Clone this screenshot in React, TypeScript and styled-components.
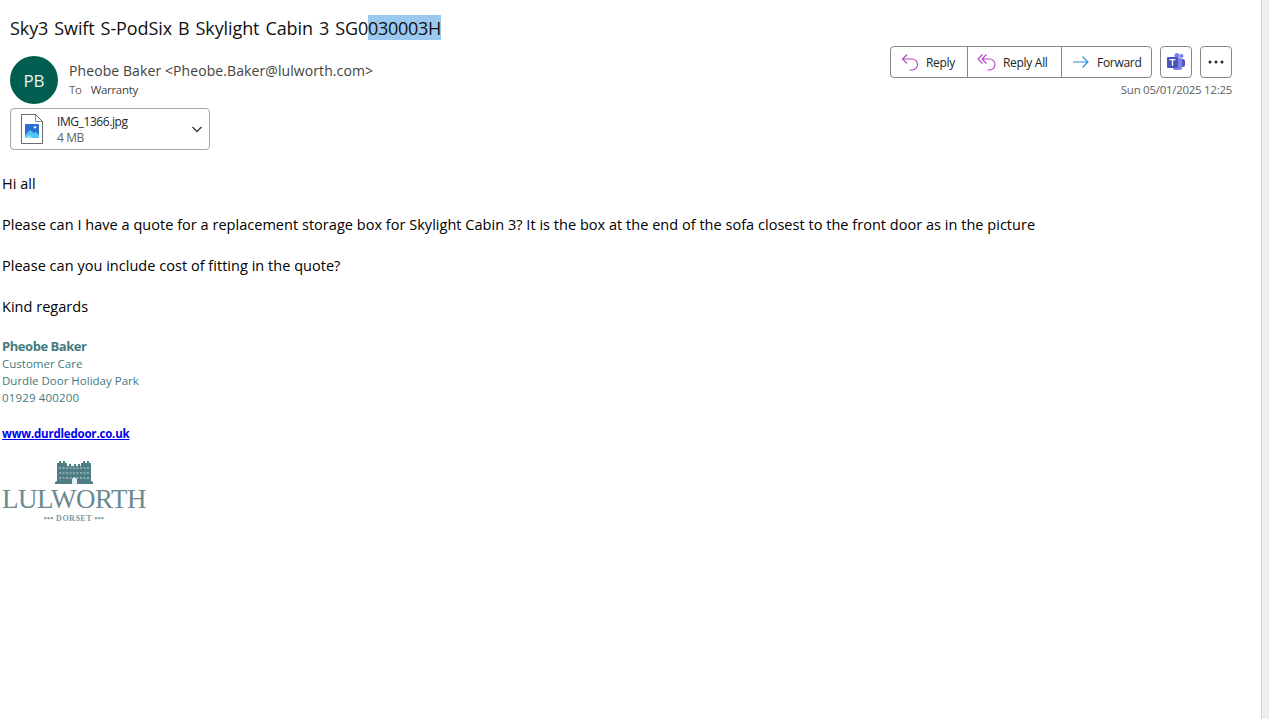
import React from "react";
import styled, { createGlobalStyle } from "styled-components";

const Global = createGlobalStyle`
  html, body { margin: 0; padding: 0; height: 100%; background: #fff; }
  #root { height: 100%; }
  * { box-sizing: border-box; }
`;

const ui = `"Open Sans", "Noto Sans", "Liberation Sans", sans-serif`;

const Page = styled.div`
  display: flex;
  width: 1269px;
  height: 719px;
  overflow: hidden;
  font-family: ${ui};
  color: #242424;
`;
const Main = styled.main`
  flex: 1;
  min-width: 0;
  display: flex;
  flex-direction: column;
`;
const Rail = styled.div`
  width: 8px;
  background: #f0eeee;
  border-left: 1px solid #d4d2d2;
`;
const Subject = styled.h1`
  margin: 0;
  padding: 15px 0 0 10px;
  height: 46px;
  font-size: 18px;
  line-height: 27px;
  font-weight: 400;
  letter-spacing: -0.1px;
  word-spacing: 1.45px;
  color: #111;
  white-space: nowrap;
`;
const Selected = styled.span`
  background: #9cc9ef;
  display: inline-block;
  height: 25px;
  padding-top: 1px;
  line-height: 25px;
  letter-spacing: -0.32px;
  vertical-align: baseline;
`;
const HeaderRow = styled.div`
  display: flex;
  justify-content: space-between;
  align-items: flex-start;
  padding: 0 29px 0 10px;
  height: 62px;
`;
const Sender = styled.div`
  display: flex;
  gap: 11px;
  padding-top: 10px;
`;
const Avatar = styled.div`
  width: 48px;
  height: 48px;
  border-radius: 50%;
  background: #005e50;
  color: #e8f4f1;
  display: flex;
  align-items: center;
  justify-content: center;
  font-size: 17px;
  letter-spacing: -0.2px;
`;
const Who = styled.div`
  display: flex;
  flex-direction: column;
  padding-top: 5px;
`;
const From = styled.div`
  font-size: 14px;
  line-height: 20px;
  letter-spacing: 0.09px;
  color: #424242;
  white-space: nowrap;
`;
const To = styled.div`
  display: flex;
  gap: 9px;
  font-size: 11.5px;
  line-height: 18px;
  letter-spacing: -0.3px;
  color: #424242;
`;
const ToLabel = styled.span`
  color: #616161;
`;
const Actions = styled.div`
  display: flex;
  flex-direction: column;
  align-items: flex-end;
`;
const Buttons = styled.div`
  display: flex;
  gap: 8px;
`;
const Group = styled.div`
  display: flex;
  height: 32px;
  border: 1px solid #8a8886;
  border-radius: 4px;
  background: #fff;
`;
const ActionButton = styled.div<{ $w: number }>`
  width: ${(p) => p.$w}px;
  display: flex;
  align-items: center;
  gap: 6px;
  padding-left: 9px;
  font-size: 12px;
  letter-spacing: -0.3px;
  color: #242424;
  & + & { border-left: 1px solid #8a8886; }
`;
const IconButton = styled.div`
  width: 32px;
  height: 32px;
  border: 1px solid #8a8886;
  border-radius: 4px;
  display: flex;
  align-items: center;
  justify-content: center;
`;
const DateLine = styled.div`
  font-size: 11.5px;
  line-height: 16px;
  letter-spacing: -0.28px;
  color: #616161;
  margin-top: 4px;
`;
const Attachment = styled.div`
  display: flex;
  align-items: center;
  width: 200px;
  height: 42px;
  margin-left: 10px;
  padding: 0 4px 0 9px;
  border: 1px solid #a6a6a6;
  border-radius: 4px;
`;
const FileText = styled.div`
  flex: 1;
  margin-left: 13px;
  padding-top: 2px;
  display: flex;
  flex-direction: column;
  font-size: 12px;
  line-height: 16px;
  letter-spacing: -0.42px;
`;
const FileSize = styled.span`
  color: #616161;
`;
const Body = styled.div`
  padding: 24px 0 0 2px;
  font-size: 14.5px;
  line-height: 20.5px;
  letter-spacing: 0.03px;
  color: #000;
`;
const Para = styled.p`
  margin: 0 0 20.5px;
  white-space: nowrap;
`;
const Signature = styled.div`
  padding-left: 2px;
  font-size: 11.5px;
  line-height: 17px;
  letter-spacing: 0;
  color: #437a80;
`;
const SigName = styled.div`
  font-size: 13px;
  font-weight: 700;
  line-height: 17px;
  letter-spacing: -0.45px;
`;
const SigPhone = styled.div`
  letter-spacing: 0.15px;
`;
const SigLink = styled.a`
  display: block;
  margin-top: 19px;
  font-size: 11.5px;
  line-height: 17px;
  font-weight: 700;
  letter-spacing: -0.2px;
  color: #0000ee;
  text-decoration: underline;
`;
const Logo = styled.div`
  width: 144px;
  margin-top: 19px;
  display: flex;
  flex-direction: column;
  align-items: center;
  color: #6b8a90;
  font-family: "Liberation Serif", serif;
`;
const LogoWord = styled.div`
  font-size: 27px;
  line-height: 24px;
  margin-top: 3px;
  white-space: nowrap;
  letter-spacing: -0.45px;
`;
const LogoSub = styled.div`
  font-size: 8px;
  line-height: 10px;
  margin-top: 3px;
  font-weight: 700;
  letter-spacing: 0.5px;
  white-space: nowrap;
  color: #7c989d;
`;

const ReplyIcon = () => (
  <svg width="20" height="20" viewBox="0 0 20 20" fill="none" stroke="#b146c2" strokeWidth="1.1">
    <path d="M7 2.5 2.5 7 7 11.5M2.5 7H12a5.5 5.5 0 0 1 0 11H9.5" />
  </svg>
);
const ReplyAllIcon = () => (
  <svg width="20" height="20" viewBox="0 0 20 20" fill="none" stroke="#b146c2" strokeWidth="1.1">
    <path d="M5.5 2.5 1 7l4.5 4.5M9.5 2.5 5 7l4.5 4.5M5 7h7.5a5.5 5.5 0 0 1 0 11H10.5" />
  </svg>
);
const ForwardIcon = () => (
  <svg width="20" height="20" viewBox="0 0 20 20" fill="none" stroke="#2a8dd4" strokeWidth="1.1">
    <path d="M2 10h15M11.5 4.5 17 10l-5.5 5.5" />
  </svg>
);
const TeamsIcon = () => (
  <svg width="20" height="20" viewBox="0 0 20 20">
    <circle cx="15.5" cy="4" r="2" fill="#7b83eb" />
    <circle cx="11" cy="3.5" r="2.6" fill="#7b83eb" />
    <rect x="13" y="7" width="6" height="8" rx="2" fill="#5059c9" />
    <rect x="7" y="6" width="9" height="12" rx="2" fill="#7b83eb" />
    <rect x="1" y="5" width="11" height="11" rx="1" fill="#4b53bc" />
    <path d="M3.5 7.7h6M6.5 7.7v6" stroke="#fff" strokeWidth="1.3" fill="none" />
  </svg>
);
const MoreIcon = () => (
  <svg width="16" height="4" viewBox="0 0 16 4" fill="#242424">
    <circle cx="2" cy="2" r="1.5" />
    <circle cx="8" cy="2" r="1.5" />
    <circle cx="14" cy="2" r="1.5" />
  </svg>
);
const FileIcon = () => (
  <svg width="24" height="32" viewBox="0 0 24 32" fill="none">
    <path d="M1.5 1.5h14l7 7v22h-21z" fill="#fff" stroke="#6b6b6b" />
    <path d="M15.5 1.5v7h7" stroke="#8a8a8a" />
    <rect x="5" y="11" width="14" height="14" rx="1" fill="#2a6fd6" />
    <path d="M5 25v-3l5-5 4 3 2-1 3 3v3z" fill="#4fc3f7" />
    <path d="M5 25l4-3 4 3z" fill="#9ee3fb" />
    <path d="M15 12.5l.6 1.2 1.2.6-1.2.6-.6 1.2-.6-1.2-1.2-.6 1.2-.6z" fill="#fff" />
  </svg>
);
const Chevron = () => (
  <svg width="16" height="16" viewBox="0 0 16 16" fill="none" stroke="#3a3a3a" strokeWidth="1.3">
    <path d="M3.5 6 8 10.5 12.5 6" />
  </svg>
);
const Castle = () => (
  <svg width="39" height="23" viewBox="0 0 39 23" fill="#4f7d84">
    <path d="M0 23v-2l2-1V2h2V0h2v2h2V0h2v2h2V5h2V3h2v2h3V3h2v2h2V3h2v2h1V2h2V0h2v2h2V0h2v2h2v18l2 1v2z" />
    <g stroke="#c6d8da" strokeWidth="1" fill="none">
      <path d="M4 7h31M4 12h31M4 17h31" strokeDasharray="2 1.5" />
    </g>
    <path d="M17 23v-4a2.5 2.5 0 0 1 5 0v4z" fill="#e6eeef" />
  </svg>
);

export default function App() {
  return (
    <>
      <Global />
      <Page>
        <Main>
          <Subject>
            Sky3 Swift S-PodSix B Skylight Cabin 3 SG0<Selected>030003H</Selected>
          </Subject>
          <HeaderRow>
            <Sender>
              <Avatar>PB</Avatar>
              <Who>
                <From>Pheobe Baker &lt;Pheobe.Baker@lulworth.com&gt;</From>
                <To>
                  <ToLabel>To</ToLabel>
                  <span>Warranty</span>
                </To>
              </Who>
            </Sender>
            <Actions>
              <Buttons>
                <Group>
                  <ActionButton $w={76}><ReplyIcon />Reply</ActionButton>
                  <ActionButton $w={94}><ReplyAllIcon />Reply All</ActionButton>
                  <ActionButton $w={90}><ForwardIcon />Forward</ActionButton>
                </Group>
                <IconButton><TeamsIcon /></IconButton>
                <IconButton><MoreIcon /></IconButton>
              </Buttons>
              <DateLine>Sun 05/01/2025 12:25</DateLine>
            </Actions>
          </HeaderRow>
          <Attachment>
            <FileIcon />
            <FileText>
              <span>IMG_1366.jpg</span>
              <FileSize>4 MB</FileSize>
            </FileText>
            <Chevron />
          </Attachment>
          <Body>
            <Para>Hi all</Para>
            <Para>Please can I have a quote for a replacement storage box for Skylight Cabin 3? It is the box at the end of the sofa closest to the front door as in the picture</Para>
            <Para>Please can you include cost of fitting in the quote?</Para>
            <Para>Kind regards</Para>
          </Body>
          <Signature>
            <SigName>Pheobe Baker</SigName>
            <div>Customer Care</div>
            <div>Durdle Door Holiday Park</div>
            <SigPhone>01929 400200</SigPhone>
            <SigLink href="#">www.durdledoor.co.uk</SigLink>
            <Logo>
              <Castle />
              <LogoWord>LULWORTH</LogoWord>
              <LogoSub>••• DORSET •••</LogoSub>
            </Logo>
          </Signature>
        </Main>
        <Rail />
      </Page>
    </>
  );
}
